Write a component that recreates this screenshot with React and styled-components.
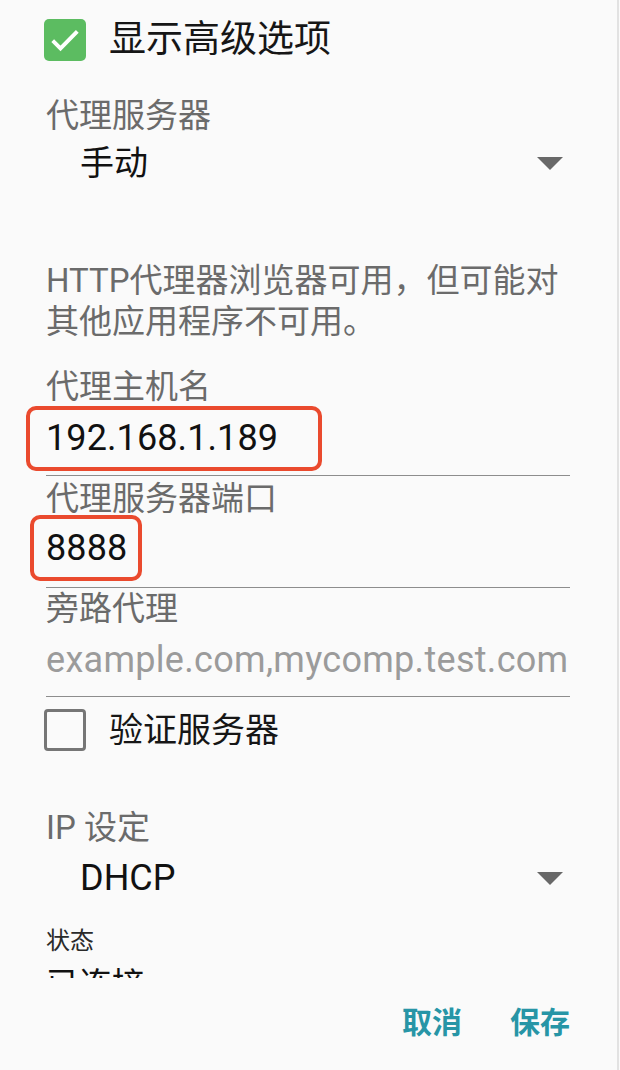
import React from 'react'
import styled, { createGlobalStyle } from 'styled-components'

const GlobalStyle = createGlobalStyle`
  body {
    margin: 0;
    background: #fafafa;
    font-family: Roboto, 'Noto Sans CJK SC', sans-serif;
  }
`

const Dialog = styled.div`
  width: 617px;
  height: 1070px;
  border-right: 2px solid #e2e2e2;
  background: #fafafa;
  display: flex;
  flex-direction: column;
`

const Scroll = styled.div`
  flex: none;
  height: 978px;
  overflow: hidden;
  padding: 10px 47px 0 46px;
  box-sizing: border-box;
`

const CheckRow = styled.div`
  display: flex;
  align-items: center;
  gap: 23px;
  height: 60px;
  margin: ${p => p.$mt || 0}px 0 0 -2px;
`

const Box = styled.span`
  flex: none;
  width: 42px;
  height: 42px;
  box-sizing: border-box;
  border-radius: ${p => (p.$checked ? 5 : 4)}px;
  background: ${p => (p.$checked ? '#5cbc61' : 'transparent')};
  border: ${p => (p.$checked ? 'none' : '3px solid #767676')};
  display: flex;
  align-items: center;
  justify-content: center;
`

const CheckText = styled.span`
  font-size: ${p => p.$size}px;
  line-height: 60px;
  color: #161616;
`

const Label = styled.div`
  margin-top: ${p => p.$mt}px;
  font-size: ${p => p.$size || 33}px;
  line-height: ${p => p.$lh || 40}px;
  color: ${p => p.$dark ? '#2a2a2a' : '#6b6b6b'};
`

const Select = styled.div`
  margin-top: ${p => p.$mt}px;
  height: 44px;
  display: flex;
  align-items: center;
  justify-content: space-between;
  padding: 0 7px 0 34px;
  font-size: ${p => p.$size}px;
  line-height: 44px;
  color: #111;
`

const Hint = styled.p`
  margin: 74.5px 0 0;
  font-size: 33px;
  line-height: 41px;
  color: #6b6b6b;
`

const Field = styled.div`
  position: relative;
  padding: ${p => p.$pt}px 0 ${p => p.$pb}px;
  border-bottom: 1.5px solid #8d8d8d;
  font-size: 36px;
  line-height: 44px;
  letter-spacing: ${p => (p.$placeholder ? 0.3 : 0.1)}px;
  color: ${p => (p.$placeholder ? '#9b9b9b' : '#111')};
  white-space: nowrap;
`

const Highlight = styled.span`
  position: absolute;
  left: ${p => p.$x}px;
  top: ${p => p.$y}px;
  width: ${p => p.$w}px;
  height: ${p => p.$h}px;
  box-sizing: border-box;
  border: 4px solid #ea4a2e;
  border-radius: 10px;
`

const Status = styled.div`
  margin-top: 9px;
  font-size: 33px;
  line-height: 40px;
  color: #111;
`

const Footer = styled.div`
  display: flex;
  justify-content: flex-end;
  gap: 48px;
  padding: 22px 47px 0 0;
`

const Button = styled.span`
  font-family: 'Noto Sans CJK SC', sans-serif;
  font-size: 30px;
  font-weight: 700;
  line-height: 40px;
  color: #2795a6;
`

const Check = () => (
  <svg width='36' height='36' viewBox='0 0 24 24'>
    <path d='M3.8 12.4l5.2 5.2L20.2 6.2' fill='none' stroke='#fff' strokeWidth='2.6' />
  </svg>
)

const Caret = () => (
  <svg width='26' height='13' viewBox='0 0 26 13'>
    <path d='M0 0h26L13 13z' fill='#686868' />
  </svg>
)

export default function App () {
  return (
    <>
      <GlobalStyle />
      <Dialog>
        <Scroll>
          <CheckRow>
            <Box $checked><Check /></Box>
            <CheckText $size={37}>显示高级选项</CheckText>
          </CheckRow>

          <Label $mt={26}>代理服务器</Label>
          <Select $mt={5} $size={34}>
            <span>手动</span>
            <Caret />
          </Select>

          <Hint>HTTP代理器浏览器可用，但可能对<br />其他应用程序不可用。</Hint>

          <Label $mt={25.5}>代理主机名</Label>
          <Field $pt={9} $pb={15}>
            192.168.1.189
            <Highlight $x={-20} $y={-1} $w={296} $h={65} />
          </Field>

          <Label $mt={2.5}>代理服务器端口</Label>
          <Field $pt={7} $pb={17}>
            8888
            <Highlight $x={-16} $y={-4} $w={112} $h={66} />
          </Field>

          <Label $mt={1.5}>旁路代理</Label>
          <Field $pt={9} $pb={14} $placeholder>example.com,mycomp.test.com</Field>

          <CheckRow $mt={2.5}>
            <Box />
            <CheckText $size={34}>验证服务器</CheckText>
          </CheckRow>

          <Label $mt={48}>IP 设定</Label>
          <Select $mt={8.5} $size={36}>
            <span>DHCP</span>
            <Caret />
          </Select>

          <Label $mt={26} $size={24} $lh={30} $dark>状态</Label>
          <Status>已连接</Status>
        </Scroll>
        <Footer>
          <Button>取消</Button>
          <Button>保存</Button>
        </Footer>
      </Dialog>
    </>
  )
}
